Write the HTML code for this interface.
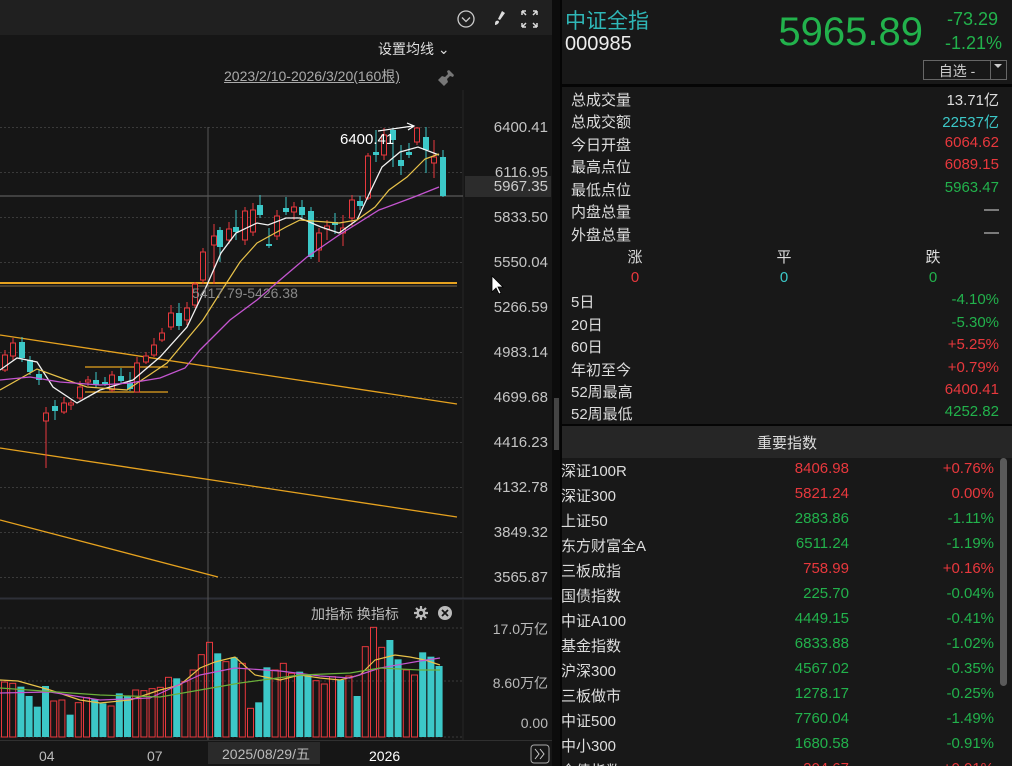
<!DOCTYPE html>
<html><head><meta charset="utf-8"><style>
html{margin:0;width:1012px;height:766px;overflow:hidden;}
body{margin:0;width:1012px;height:766px;overflow:hidden;position:relative;background:#141414;font-family:"Liberation Sans","Noto Sans CJK SC",sans-serif;}
svg{position:absolute;left:0;top:0}
.p{position:absolute;white-space:nowrap}
</style></head><body>
<svg id="s" width="1012" height="766" xmlns="http://www.w3.org/2000/svg">
<rect x="0" y="0" width="552" height="766" fill="#161616"/>
<rect x="0" y="0" width="552" height="35" fill="#202020"/>
<rect x="552" y="0" width="8" height="766" fill="#0c0c0c"/>
<rect x="554" y="398" width="5" height="52" fill="#444"/>
<rect x="560" y="0" width="452" height="766" fill="#181818"/>
<rect x="560" y="0" width="2" height="766" fill="#050505"/>
<rect x="560" y="84" width="452" height="3" fill="#050505"/>
<rect x="560" y="424" width="452" height="2" fill="#050505"/>
<rect x="562" y="426" width="450" height="32" fill="#262626"/>
<rect x="1000" y="458" width="7" height="228" rx="3.5" fill="#5a5a5a"/>
<circle cx="466" cy="19" r="8" fill="none" stroke="#ccc" stroke-width="1.3"/>
<path d="M462 17.5l4 4 4-4" fill="none" stroke="#ccc" stroke-width="1.3"/>
<path d="M502 11l3 2-5 7-2-1z" fill="#ddd"/><path d="M496 21c2-1 3 0 3 1s-2 3-4 3c0-2 0-3 1-4z" fill="#ddd"/>
<path d="M522 11h4M522 11v4M522 11l4 4M537 11h-4M537 11v4M537 11l-4 4M522 27h4M522 27v-4M522 27l4-4M537 27h-4M537 27v-4M537 27l-4-4" stroke="#ddd" stroke-width="1.5" fill="none"/>
<path d="M438 80l4-4 3 1 3-3-1-3 2-1 5 5-1 2-3-1-3 3 1 3-4 4z" fill="#777"/>
<line x1="463" y1="90" x2="463" y2="598" stroke="#262626"/>
<line x1="463" y1="600" x2="463" y2="740" stroke="#262626"/>
<line x1="0" y1="598.5" x2="552" y2="598.5" stroke="#2e3038" stroke-width="2"/>
<rect x="0" y="740" width="552" height="26" fill="#161616"/>
<line x1="0" y1="740.5" x2="552" y2="740.5" stroke="#303030"/>
<g id="grid" stroke="#3a3a3a" stroke-dasharray="2,2"></g>
<line x1="0" y1="196" x2="463" y2="196" stroke="#6a6a6a"/>
<rect x="465" y="176" width="86" height="21" fill="#2c2c2c"/>
<line x1="208" y1="127" x2="208" y2="740" stroke="#555"/>
<line x1="0" y1="283" x2="457" y2="283" stroke="#e6a21f" stroke-width="2"/>
<line x1="0" y1="286" x2="457" y2="286" stroke="#7a6a50" stroke-width="1"/>
<line x1="0" y1="335" x2="457" y2="404" stroke="#e6a21f" stroke-width="1.3"/>
<line x1="0" y1="448" x2="457" y2="517" stroke="#e6a21f" stroke-width="1.3"/>
<line x1="0" y1="520" x2="218" y2="577" stroke="#e6a21f" stroke-width="1.3"/>
<line x1="85" y1="367" x2="168" y2="367" stroke="#e6a21f" stroke-width="1.3"/>
<line x1="85" y1="392" x2="168" y2="392" stroke="#e6a21f" stroke-width="1.3"/>
<g id="c"></g>
<polyline id="mw" fill="none" stroke="#f2f2f2" stroke-width="1.3"/>
<polyline id="my" fill="none" stroke="#e8c24a" stroke-width="1.2"/>
<polyline id="mm" fill="none" stroke="#c455d0" stroke-width="1.3"/>
<g id="v"></g>
<polyline id="vy" fill="none" stroke="#e8c24a" stroke-width="1.2"/>
<polyline id="vm" fill="none" stroke="#c455d0" stroke-width="1.2"/>
<polyline id="vg" fill="none" stroke="#6bb03a" stroke-width="1.2"/>
<path d="M378 131l35-5M407 123l7 3-6 4" stroke="#fff" stroke-width="1.2" fill="none"/>
<rect x="208" y="742" width="112" height="22" fill="#2a2a2a"/>
<rect x="531" y="745" width="18" height="18" rx="3" fill="none" stroke="#aaa"/>
<path d="M535 749l4 5-4 5M540 749l4 5-4 5" stroke="#ccc" fill="none"/>
<path d="M421 606v14M414 613h14M416 608l10 10M426 608l-10 10" stroke="#bbb" stroke-width="2.2"/>
<circle cx="421" cy="613" r="4.5" fill="#bbb"/>
<circle cx="421" cy="613" r="2" fill="#161616"/>
<circle cx="445" cy="613" r="7" fill="#bbb"/><path d="M442 610l6 6M448 610l-6 6" stroke="#161616" stroke-width="1.8"/>
<path d="M492 276v16l4-4 3 6 2-1-3-6h5z" fill="#fff" stroke="#000" stroke-width="0.8"/>
<path d="M994 64l4 4 4-4z" fill="#ccc"/>
</svg>
<div class="p" style="left:378px;top:39px;font-size:14px;color:#ddd">设置均线 ⌄</div>
<div class="p" style="left:224px;top:66px;font-size:14px;color:#aaa;text-decoration:underline">2023/2/10-2026/3/20(160根)</div>
<div class="p" style="left:340px;top:131px;font-size:15px;color:#fff">6400.41</div>
<div class="p" style="left:192px;top:285px;font-size:14px;color:#888">5417.79-5426.38</div>
<div id="ax"></div>
<div class="p" style="left:466px;top:178px;font-size:15px;color:#ccc;width:82px;text-align:right">5967.35</div>
<div class="p" style="left:311px;top:604px;font-size:14px;color:#bbb">加指标 换指标</div>
<div class="p" style="left:470px;top:619px;font-size:14px;color:#bbb;width:78px;text-align:right">17.0万亿</div>
<div class="p" style="left:470px;top:673px;font-size:14px;color:#bbb;width:78px;text-align:right">8.60万亿</div>
<div class="p" style="left:470px;top:715px;font-size:14px;color:#bbb;width:78px;text-align:right">0.00</div>
<div class="p" style="left:39px;top:748px;font-size:14px;color:#bbb">04</div>
<div class="p" style="left:147px;top:748px;font-size:14px;color:#bbb">07</div>
<div class="p" style="left:222px;top:744px;font-size:14px;color:#bbb">2025/08/29/五</div>
<div class="p" style="left:369px;top:748px;font-size:14px;color:#fff">2026</div>
<div class="p" style="left:565px;top:5px;font-size:21px;color:#2fb7b7">中证全指</div>
<div class="p" style="left:565px;top:33px;font-size:20px;color:#eee">000985</div>
<div class="p" style="left:770px;top:10px;font-size:40px;color:#22b24c;width:153px;text-align:right">5965.89</div>
<div class="p" style="left:930px;top:9px;font-size:18px;color:#22b24c;width:68px;text-align:right">-73.29</div>
<div class="p" style="left:930px;top:33px;font-size:18px;color:#22b24c;width:72px;text-align:right">-1.21%</div>
<div class="p" style="left:923px;top:60px;width:66px;height:18px;border:1px solid #666;font-size:14px;color:#ccc;text-align:center;line-height:20px">自选 -</div>
<div class="p" style="left:990px;top:60px;width:15px;height:18px;border:1px solid #666"></div>
<div id="rp"></div>
<div class="p" style="left:562px;top:432px;width:450px;text-align:center;font-size:15px;color:#ddd">重要指数</div>
<div id="tb"></div>
<script>
var NS="http://www.w3.org/2000/svg";
function el(p,t,a){var e=document.createElementNS(NS,t);for(var k in a)e.setAttribute(k,a[k]);p.appendChild(e);return e;}
var g=document.getElementById('grid'),ax=document.getElementById('ax');
var lab=["6400.41","6116.95","5833.50","5550.04","5266.59","4983.14","4699.68","4416.23","4132.78","3849.32","3565.87"];
lab.forEach(function(l,i){var y=127.5+i*45;el(g,'line',{x1:0,y1:y,x2:463,y2:y});
ax.innerHTML+='<div class="p" style="left:466px;top:'+(y-9)+'px;font-size:15px;color:#c4c4c4;width:82px;text-align:right">'+l+'</div>';});
[628,681].forEach(function(y){el(g,'line',{x1:0,y1:y,x2:463,y2:y});});
el(g,'line',{x1:0,y1:737,x2:463,y2:737});
var R="#e8383d",C="#3cc8c8";
var cs=[[2,R,355,370,350,372],[10,R,343,356,338,360],[19,C,342,358,337,362],[27,C,360,372,356,375],[36,C,374,380,370,385],[43,R,413,421,407,468],[52,C,406,411,400,420],[61,R,403,412,397,414],[68,R,403,405,400,410],[77,R,387,398,381,400],[85,R,380,382,376,386],[93,C,380,385,372,388],[102,C,382,384,377,386],[109,R,375,390,371,392],[118,C,376,381,368,383],[127,C,383,389,372,391],[134,R,363,392,357,392],[143,R,356,362,352,364],[151,R,345,355,338,357],[159,R,333,340,328,342],[168,R,313,327,305,330],[176,C,313,326,303,330],[184,R,308,320,302,325],[192,R,284,305,282,308],[200,R,252,280,248,284],[211,R,236,245,224,284],[217,C,230,247,227,262],[226,R,229,240,222,244],[233,C,227,232,210,240],[242,R,211,240,207,245],[250,R,210,232,203,236],[257,C,205,215,195,218],[266,C,244,246,228,248],[274,R,216,236,210,240],[283,C,208,212,197,215],[291,R,207,212,202,220],[299,C,207,215,200,218],[308,C,211,257,207,259],[316,R,233,250,228,262],[324,R,226,229,220,240],[332,C,222,225,213,234],[340,R,228,233,215,246],[349,R,200,218,195,226],[357,C,201,206,196,210],[365,R,156,198,153,200],[373,C,152,155,130,162],[381,R,135,155,128,160],[390,C,130,140,128,167],[398,C,160,166,145,175],[406,C,152,155,143,158],[414,R,128,142,127,145],[423,C,137,150,127,173],[431,R,157,163,140,178],[440,C,157,196,150,197]];
var cg=document.getElementById('c');
cs.forEach(function(c){var x=c[0];el(cg,'line',{x1:x+3,y1:c[4],x2:x+3,y2:c[5],stroke:c[1],'stroke-width':1});
if(c[1]==R)el(cg,'rect',{x:x+0.5,y:c[2],width:5,height:Math.max(1,c[3]-c[2]),fill:'#161616',stroke:R,'stroke-width':1});
else el(cg,'rect',{x:x,y:c[2],width:6,height:Math.max(1.5,c[3]-c[2]),fill:C});});
function pl(id,a){document.getElementById(id).setAttribute('points',a.map(function(p){return p.join(',')}).join(' '));}
pl('mw',[[0,370],[17,358],[37,362],[53,387],[77,403],[100,390],[133,380],[160,357],[187,327],[207,285],[221,253],[236,233],[257,223],[268,225],[286,218],[300,218],[321,227],[339,233],[357,220],[371,190],[382,167],[400,152],[418,147],[439,155]]);
pl('my',[[0,390],[37,369],[67,380],[87,387],[127,390],[167,363],[203,320],[222,290],[240,262],[257,243],[286,227],[300,220],[339,223],[357,220],[375,207],[389,190],[407,177],[425,159],[439,154]]);
pl('mm',[[0,380],[30,377],[60,382],[100,385],[130,383],[160,378],[185,368],[200,350],[230,320],[257,300],[280,280],[307,257],[339,235],[379,210],[414,197],[439,187]]);
var vt=[276,280,290,318,350,288,333,330,374,338,323,328,340,348,310,318,300,302,296,292,262,265,275,240,194,157,190,215,202,220,355,337,232,240,220,250,245,255,272,282,260,270,258,318,170,112,172,150,208,240,255,187,200,228];
var vc="RRCCCCRRCRRCCRCCRRRRRCRRRRCRCRRCCRRRCCRRRCRCRRRCCRRCCC";
var vg=document.getElementById('v');
vt.forEach(function(t,i){var x=1+i*8.2,y=590+t/3;
if(vc[i]=='R')el(vg,'rect',{x:x+0.5,y:y,width:6,height:737-y,fill:'none',stroke:R,'stroke-width':1});
else el(vg,'rect',{x:x,y:y,width:7,height:737-y,fill:C});});
pl('vy',[[0,680],[18,681],[50,690],[80,700],[100,703],[130,700],[160,690],[180,685],[200,668],[215,662],[235,657],[255,675],[280,680],[300,675],[320,678],[340,680],[360,675],[375,660],[395,655],[410,657],[425,660],[440,665]]);
pl('vm',[[0,693],[50,692],[100,700],[150,698],[200,675],[235,668],[280,671],[320,676],[350,678],[380,668],[420,661],[440,658]]);
pl('vg',[[0,688],[100,695],[160,697],[200,690],[240,683],[300,675],[350,673],[380,668],[420,670],[440,670]]);
var G="#22b24c",W="#ddd",CY="#3cc8c8";
var rows=[["总成交量","13.71亿",W,99],["总成交额","22537亿",CY,121],["今日开盘","6064.62",R,144],["最高点位","6089.15",R,166],["最低点位","5963.47",G,189],["内盘总量","—",W,211],["外盘总量","—",W,234],["5日","-4.10%",G,301],["20日","-5.30%",G,324],["60日","+5.25%",R,346],["年初至今","+0.79%",R,369],["52周最高","6400.41",R,391],["52周最低","4252.82",G,413]];
var h='';rows.forEach(function(r){h+='<div class="p" style="left:571px;top:'+(r[3]-10)+'px;font-size:15px;color:#ddd">'+r[0]+'</div><div class="p" style="left:850px;width:149px;text-align:right;top:'+(r[3]-10)+'px;font-size:15px;color:'+r[2]+'">'+r[1]+'</div>';});
[["涨","0",R,635],["平","0",CY,784],["跌","0",G,933]].forEach(function(r){h+='<div class="p" style="left:'+(r[3]-20)+'px;width:40px;text-align:center;top:246px;font-size:15px;color:#ddd">'+r[0]+'</div><div class="p" style="left:'+(r[3]-20)+'px;width:40px;text-align:center;top:269px;font-size:15px;color:'+r[2]+'">'+r[1]+'</div>';});
document.getElementById('rp').innerHTML=h;
var t=[["深证100R","8406.98","+0.76%",R,R],["深证300","5821.24","0.00%",R,R],["上证50","2883.86","-1.11%",G,G],["东方财富全A","6511.24","-1.19%",G,G],["三板成指","758.99","+0.16%",R,R],["国债指数","225.70","-0.04%",G,G],["中证A100","4449.15","-0.41%",G,G],["基金指数","6833.88","-1.02%",G,G],["沪深300","4567.02","-0.35%",G,G],["三板做市","1278.17","-0.25%",G,G],["中证500","7760.04","-1.49%",G,G],["中小300","1680.58","-0.91%",G,G],["全债指数","204.67","+0.01%",R,R]];
h='';t.forEach(function(r,i){var y=470+i*25-10;h+='<div class="p" style="left:561px;top:'+y+'px;font-size:15px;color:#ddd">'+r[0]+'</div><div class="p" style="left:700px;width:149px;text-align:right;top:'+y+'px;font-size:15px;color:'+r[3]+'">'+r[1]+'</div><div class="p" style="left:860px;width:134px;text-align:right;top:'+y+'px;font-size:15px;color:'+r[4]+'">'+r[2]+'</div>';});
document.getElementById('tb').innerHTML=h;
</script>
</body></html>
